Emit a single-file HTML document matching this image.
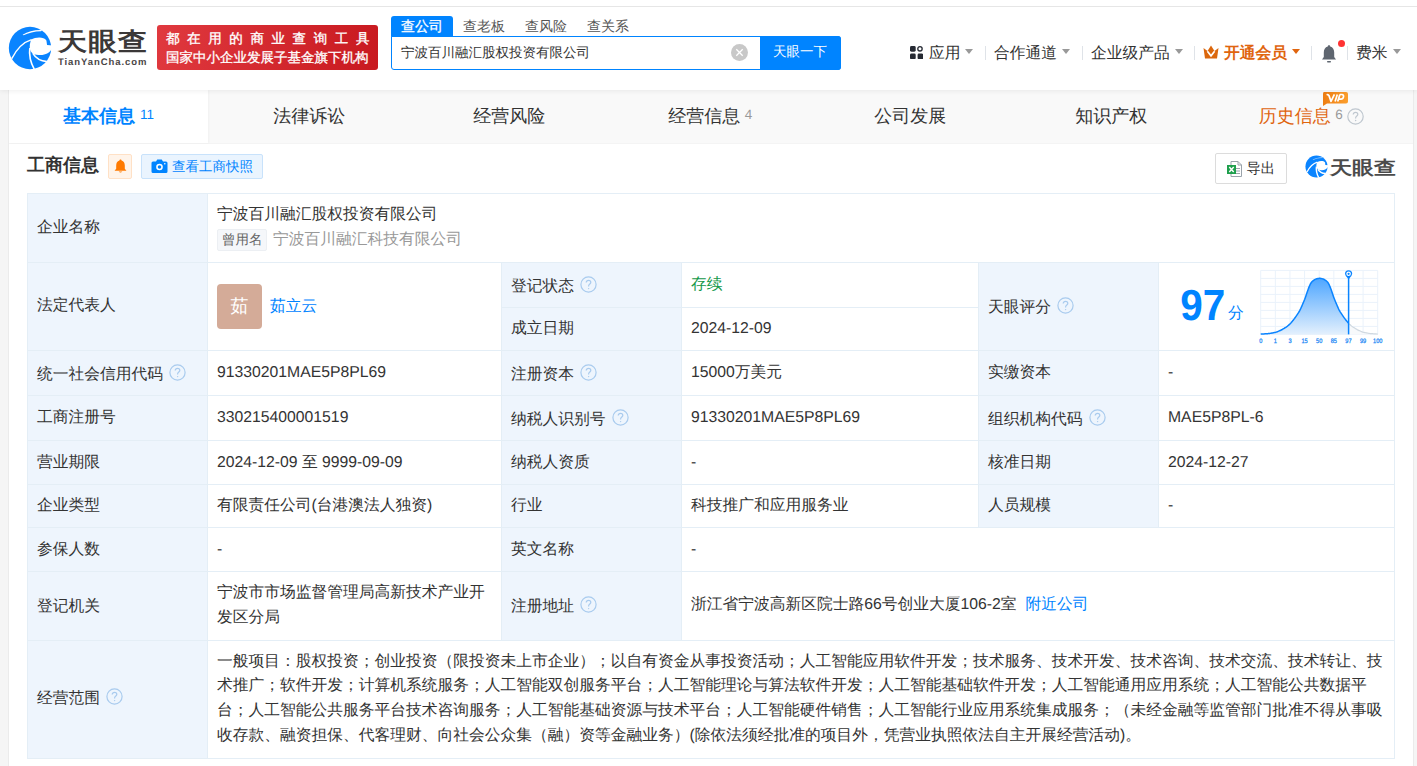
<!DOCTYPE html>
<html><head><meta charset="utf-8">
<style>
*{box-sizing:border-box;margin:0;padding:0}
html,body{width:1417px;height:766px;overflow:hidden}
body{position:relative;background:#f5f5f5;font-family:"Liberation Sans",sans-serif;color:#333;text-rendering:geometricPrecision;font-size:15.75px}
.a{position:absolute;white-space:nowrap}
#hdr{position:absolute;left:0;top:0;width:1417px;height:90px;background:#fff;z-index:2;box-shadow:0 1px 5px rgba(0,0,0,.07)}
#topline{position:absolute;left:0;top:6px;width:1417px;height:1px;background:#e6e6e6}
#card{position:absolute;left:9px;top:90px;width:1404px;height:676px;background:#fff;box-shadow:-1px 0 0 #ebebeb,1px 0 0 #ebebeb}
.tri{position:absolute;width:0;height:0;border-left:4.5px solid transparent;border-right:4.5px solid transparent;border-top:5px solid #999}
.sep{position:absolute;top:46px;width:1px;height:14px;background:#dfe3e8}
.nav{position:absolute;top:43px;font-size:15.75px;line-height:22px;color:#333}
/* tabs */
#tabs{position:absolute;left:0;top:0;width:1404px;height:54px;background:#f9f9f9;border-bottom:1px solid #f4f4f4}
.tab{position:absolute;top:0;height:53px;width:200.57px;text-align:center;font-size:18px;line-height:53px;color:#333}
.tab sup{font-size:13.5px;line-height:0;color:#999;vertical-align:3px;margin-left:4.5px}
/* table */
.ln{position:absolute;background:#e4eef6}
.lb{position:absolute;background:#eef5fd}
.t{position:absolute;white-space:nowrap;font-size:15.75px;line-height:22px;color:#333}
.qi{position:relative;top:2px;margin-left:6px}
.q{display:inline-block;width:16px;height:16px;border:1px solid #aacff2;border-radius:50%;font-size:11px;line-height:14px;text-align:center;color:#aacff2;vertical-align:-2px;margin-left:6px;font-family:"Liberation Sans",sans-serif}
</style></head><body>
<div id="hdr">
  <div id="topline"></div>
  <svg class="a" style="left:6px;top:24px" width="48" height="48" viewBox="0 0 766 766"><circle cx="383" cy="383" r="338" fill="#0a84ff"/><path d="M398 250 C480 205 600 200 645 262 L655 335 L745 345 L745 372 C705 470 610 505 520 495 C470 490 440 480 425 470 C392 440 372 400 380 330 Z" fill="#fff"/><path d="M92 552 C170 400 270 292 408 250" stroke="#fff" stroke-width="22" fill="none"/><path d="M380 385 C365 500 395 620 452 725" stroke="#fff" stroke-width="26" fill="none"/><path d="M428 468 C480 552 560 592 652 600" stroke="#fff" stroke-width="26" fill="none"/><path d="M265 172 C350 125 455 92 575 98 L560 116 C450 118 360 145 280 180 Z" fill="#fff"/></svg>
  <div class="a" style="left:58px;top:22.5px;font-size:29px;line-height:36px;font-weight:bold;color:#3b3838;letter-spacing:1px;transform:scaleY(.86);transform-origin:0 30px">天眼查</div>
  <div class="a" style="left:58px;top:57px;font-size:9.5px;line-height:12px;font-weight:bold;color:#4a4646;letter-spacing:0.92px">TianYanCha.com</div>
  <div class="a" style="left:157px;top:25px;width:221px;height:45px;border-radius:3px;background:linear-gradient(100deg,#e0393f,#c8191f)"></div>
  <div class="a" style="left:166px;top:29px;font-size:13.5px;line-height:20px;color:#fff;letter-spacing:7.6px;-webkit-text-stroke:.35px #fff">都在用的商业查询工具</div>
  <div class="a" style="left:166px;top:47.5px;font-size:13.5px;line-height:20px;color:#fff;-webkit-text-stroke:.3px #fff">国家中小企业发展子基金旗下机构</div>
  <!-- search -->
  <div class="a" style="left:391px;top:16px;width:62px;height:21px;background:#0084ff;border-radius:3px 3px 0 0"></div>
  <div class="a" style="left:401px;top:15px;font-size:14px;line-height:22px;color:#fff;-webkit-text-stroke:.3px #fff">查公司</div>
  <div class="a" style="left:463px;top:15px;font-size:14px;line-height:22px;color:#555">查老板</div>
  <div class="a" style="left:525px;top:15px;font-size:14px;line-height:22px;color:#555">查风险</div>
  <div class="a" style="left:587px;top:15px;font-size:14px;line-height:22px;color:#555">查关系</div>
  <div class="a" style="left:391px;top:36px;width:450px;height:34px;border:1px solid #0084ff;border-radius:0 3px 3px 3px;background:#fff"></div>
  <div class="a" style="left:401px;top:42px;font-size:13.5px;line-height:22px;color:#333">宁波百川融汇股权投资有限公司</div>
  <div class="a" style="left:730.5px;top:43.5px;width:17px;height:17px;border-radius:50%;background:#c8c8c8"></div>
  <svg class="a" style="left:730.5px;top:43.5px" width="17" height="17" viewBox="0 0 17 17"><path d="M5.3 5.3L11.7 11.7M11.7 5.3L5.3 11.7" stroke="#fff" stroke-width="1.3"/></svg>
  <div class="a" style="left:760px;top:36px;width:81px;height:34px;background:#0084ff;border-radius:0 3px 3px 0"></div>
  <div class="a" style="left:773px;top:41px;font-size:13.5px;line-height:22px;color:#fff">天眼一下</div>
  <!-- right nav -->
  <svg class="a" style="left:910px;top:46px" width="13.3" height="13.3" viewBox="0 0 14 14">
    <rect x="0" y="0" width="6" height="6" rx="1.5" fill="#262a33"/>
    <circle cx="10.5" cy="3" r="2.3" stroke="#262a33" stroke-width="1.4" fill="none"/>
    <rect x="0" y="8" width="6" height="6" rx="1.5" fill="#262a33"/>
    <rect x="8" y="8" width="6" height="6" rx="1.5" fill="#262a33"/>
  </svg>
  <div class="nav a" style="left:929px">应用</div>
  <div class="tri" style="left:965px;top:49px"></div>
  <div class="sep" style="left:985px"></div>
  <div class="nav a" style="left:994px">合作通道</div>
  <div class="tri" style="left:1062px;top:49px"></div>
  <div class="sep" style="left:1082px"></div>
  <div class="nav a" style="left:1091px">企业级产品</div>
  <div class="tri" style="left:1175px;top:49px"></div>
  <div class="sep" style="left:1194px"></div>
  <svg class="a" style="left:1203px;top:45px" width="16" height="14" viewBox="0 0 16 14">
    <path d="M0.5 3 L4.5 6 L8 0.5 L11.5 6 L15.5 3 L14 13.5 L2 13.5 Z" fill="#db670d"/>
    <path d="M4.4 6.2 L8 10.8 L11.6 6.2" stroke="#fff" stroke-width="1.7" fill="none"/>
  </svg>
  <div class="nav a" style="left:1224px;color:#e0650f;font-weight:bold">开通会员</div>
  <div class="tri" style="left:1292px;top:49px;border-top-color:#e0650f"></div>
  <div class="sep" style="left:1311px"></div>
  <svg class="a" style="left:1321px;top:44px" width="16" height="19" viewBox="0 0 16 19">
    <path d="M8 1.2 C8.8 1.2 9.2 1.7 9.2 2.4 C12 3 13.2 5.5 13.2 8.5 L13.2 13 L15 15.5 L1 15.5 L2.8 13 L2.8 8.5 C2.8 5.5 4 3 6.8 2.4 C6.8 1.7 7.2 1.2 8 1.2 Z" fill="#5f6670"/>
    <rect x="6" y="17" width="4" height="1.5" rx=".7" fill="#5f6670"/>
  </svg>
  <div class="a" style="left:1338px;top:40px;width:7px;height:7px;border-radius:50%;background:#ff3333"></div>
  <div class="sep" style="left:1347px"></div>
  <div class="nav a" style="left:1356px">费米</div>
  <div class="tri" style="left:1393px;top:49px"></div>
</div>
<div id="card">
  <div id="tabs">
    <div class="a" style="left:0;top:0;width:199px;height:53px;background:#fff;box-shadow:1px 0 2px rgba(0,0,0,.04)"></div>
    <div class="tab a" style="left:0;width:199px;color:#0084ff;font-weight:bold">基本信息<sup style="color:#0084ff;font-weight:normal;margin-left:5px">11</sup></div>
    <div class="tab a" style="left:200px">法律诉讼</div>
    <div class="tab a" style="left:400px">经营风险</div>
    <div class="tab a" style="left:601px">经营信息<sup>4</sup></div>
    <div class="tab a" style="left:801px">公司发展</div>
    <div class="tab a" style="left:1002px">知识产权</div>
    <div class="tab a" style="left:1202px;color:#e0650f">历史信息<sup>6</sup><svg width="17" height="17" viewBox="0 0 17 17" style="vertical-align:-1px;margin-left:4px;position:relative;top:1.5px"><circle cx="8.5" cy="8.5" r="7.7" fill="none" stroke="#bfc7cf" stroke-width="1.2"/><path d="M6.2 6.6 C6.2 5.2 7.2 4.4 8.5 4.4 C9.8 4.4 10.8 5.2 10.8 6.4 C10.8 7.9 8.6 8.2 8.6 10 L8.6 10.6" fill="none" stroke="#bfc7cf" stroke-width="1.2"/><circle cx="8.6" cy="12.6" r=".75" fill="#bfc7cf"/></svg></div>
    <svg class="a" style="left:1313px;top:2px" width="26" height="14" viewBox="0 0 26 14">
      <defs><linearGradient id="vg" x1="0" y1="0" x2="1" y2="0"><stop offset="0" stop-color="#ee7d12"/><stop offset="1" stop-color="#fb9e2c"/></linearGradient></defs>
      <path d="M2 0 H24 Q26 0 26 2 V9.5 Q26 11.5 24 11.5 H5 L1 14 V2 Q1 0 2 0 Z" fill="url(#vg)"/>
      <path d="M4.6 2.8 Q6.4 2.2 7 3.6 L9 9.4 L12.4 2.4 M15.3 2.4 L13.1 9.6 M17.9 2.4 L15.7 9.6 M17.9 2.5 H19.9 Q21.9 2.7 21.5 4.9 Q21.1 7.2 18.9 7.2 H16.9" fill="none" stroke="#fff" stroke-width="1.7" stroke-linejoin="round"/>
    </svg>
  </div>
  <!-- section header -->
  <div class="a" style="left:18px;top:62px;font-size:18px;line-height:26px;font-weight:bold;color:#333">工商信息</div>
  <div class="a" style="left:99px;top:64px;width:24px;height:25px;background:#fff4ea;border:1px solid #ffe1c6;border-radius:2px"></div>
  <svg class="a" style="left:104.5px;top:69px" width="13" height="14" viewBox="0 0 12 13">
    <path d="M6 0.5 C6.6 0.5 7 .9 7 1.5 C9 2 10 3.8 10 6 L10 9 L11.5 10.8 L0.5 10.8 L2 9 L2 6 C2 3.8 3 2 5 1.5 C5 .9 5.4 .5 6 .5Z" fill="#ff7a00"/>
    <path d="M4.3 11.5 Q6 13.5 7.7 11.5 Z" fill="#ff7a00"/>
  </svg>
  <div class="a" style="left:132px;top:64px;width:122px;height:25px;background:#eaf4fe;border:1px solid #c8e2fb;border-radius:2px"></div>
  <svg class="a" style="left:142px;top:68px" width="17" height="16" viewBox="0 0 17 16">
    <path d="M2 3.5 H5 L6.3 1.5 H10.7 L12 3.5 H15 Q16.5 3.5 16.5 5 V13.5 Q16.5 15 15 15 H2 Q.5 15 .5 13.5 V5 Q.5 3.5 2 3.5Z" fill="#0084ff"/>
    <circle cx="8.5" cy="9" r="3.3" fill="#fff"/><circle cx="8.5" cy="9" r="1.8" fill="#0084ff"/>
    <circle cx="13.8" cy="5.8" r=".8" fill="#fff"/>
  </svg>
  <div class="a" style="left:163px;top:65.5px;font-size:13.5px;line-height:22px;color:#0084ff">查看工商快照</div>
  <div class="a" style="left:1206px;top:63px;width:72px;height:31px;border:1px solid #dcdcdc;border-radius:2px;background:#fff"></div>
  <svg class="a" style="left:1218px;top:71px" width="15" height="16" viewBox="0 0 15 16">
    <path d="M4 .5 H11 L14.5 4 V15.5 H4 Z" fill="#fff" stroke="#9aa3ab" stroke-width="1"/>
    <path d="M11 .5 V4 H14.5" fill="none" stroke="#9aa3ab" stroke-width="1"/>
    <rect x="9" y="7" width="4" height="1" fill="#9aa3ab"/><rect x="9" y="9.5" width="4" height="1" fill="#9aa3ab"/><rect x="9" y="12" width="4" height="1" fill="#9aa3ab"/>
    <rect x="0" y="4" width="9" height="9" fill="#1e9f4c"/>
    <path d="M2.3 6 L6.7 11 M6.7 6 L2.3 11" stroke="#fff" stroke-width="1.4"/>
  </svg>
  <div class="a" style="left:1237.5px;top:67.5px;font-size:14.3px;line-height:22px;color:#333">导出</div>
  <svg class="a" style="left:1294.5px;top:63.5px" width="25" height="25" viewBox="0 0 766 766"><circle cx="383" cy="383" r="338" fill="#0a84ff"/><path d="M398 250 C480 205 600 200 645 262 L655 335 L745 345 L745 372 C705 470 610 505 520 495 C470 490 440 480 425 470 C392 440 372 400 380 330 Z" fill="#fff"/><path d="M92 552 C170 400 270 292 408 250" stroke="#fff" stroke-width="40" fill="none"/><path d="M380 385 C365 500 395 620 452 725" stroke="#fff" stroke-width="44" fill="none"/><path d="M428 468 C480 552 560 592 652 600" stroke="#fff" stroke-width="44" fill="none"/><path d="M265 172 C350 125 455 92 575 98 L560 122 C450 124 360 150 280 185 Z" fill="#fff" opacity=".6"/></svg>
  <div class="a" style="left:1321px;top:62px;font-size:22px;line-height:30px;font-weight:bold;color:#4b4b4b;transform:scaleY(.84);transform-origin:0 23px">天眼查</div>
</div>

<div id="tbl">
<div class="lb" style="left:28px;top:194px;width:179px;height:564px"></div>
<div class="lb" style="left:502px;top:263px;width:179px;height:87px"></div>
<div class="lb" style="left:502px;top:351px;width:179px;height:44px"></div>
<div class="lb" style="left:502px;top:396px;width:179px;height:44px"></div>
<div class="lb" style="left:502px;top:441px;width:179px;height:43px"></div>
<div class="lb" style="left:502px;top:485px;width:179px;height:42px"></div>
<div class="lb" style="left:502px;top:528px;width:179px;height:43px"></div>
<div class="lb" style="left:502px;top:572px;width:179px;height:68px"></div>
<div class="lb" style="left:979px;top:351px;width:179px;height:44px"></div>
<div class="lb" style="left:979px;top:396px;width:179px;height:44px"></div>
<div class="lb" style="left:979px;top:441px;width:179px;height:43px"></div>
<div class="lb" style="left:979px;top:485px;width:179px;height:42px"></div>
<div class="lb" style="left:979px;top:263px;width:179px;height:87px"></div>
<div class="ln" style="left:27px;top:193px;width:1368px;height:1px"></div>
<div class="ln" style="left:27px;top:262px;width:1368px;height:1px"></div>
<div class="ln" style="left:27px;top:350px;width:1368px;height:1px"></div>
<div class="ln" style="left:27px;top:395px;width:1368px;height:1px"></div>
<div class="ln" style="left:27px;top:440px;width:1368px;height:1px"></div>
<div class="ln" style="left:27px;top:484px;width:1368px;height:1px"></div>
<div class="ln" style="left:27px;top:527px;width:1368px;height:1px"></div>
<div class="ln" style="left:27px;top:571px;width:1368px;height:1px"></div>
<div class="ln" style="left:27px;top:640px;width:1368px;height:1px"></div>
<div class="ln" style="left:27px;top:758px;width:1368px;height:1px"></div>
<div class="ln" style="left:501px;top:307px;width:180px;height:1px"></div>
<div class="ln" style="left:681px;top:307px;width:297px;height:1px"></div>
<div class="ln" style="left:27px;top:193px;width:1px;height:566px"></div>
<div class="ln" style="left:1394px;top:193px;width:1px;height:566px"></div>
<div class="ln" style="left:207px;top:193px;width:1px;height:565px"></div>
<div class="ln" style="left:501px;top:262px;width:1px;height:378px"></div>
<div class="ln" style="left:681px;top:262px;width:1px;height:378px"></div>
<div class="ln" style="left:978px;top:262px;width:1px;height:265px"></div>
<div class="ln" style="left:1158px;top:262px;width:1px;height:265px"></div>
<div class="t" style="left:37px;top:216.5px;">企业名称</div>
<div class="t" style="left:217px;top:203.5px;">宁波百川融汇股权投资有限公司</div>
<div class="a" style="left:217px;top:229px;width:50px;height:22px;background:#f5f7fa;border:1px solid #eceff3;border-radius:2px"></div>
<div class="t" style="left:222px;top:229px;font-size:13.5px;color:#666">曾用名</div>
<div class="t" style="left:273px;top:229px;color:#999">宁波百川融汇科技有限公司</div>
<div class="t" style="left:37px;top:295.0px;">法定代表人</div>
<div class="a" style="left:217px;top:284px;width:45px;height:45px;background:#d4ab98;border-radius:4px;color:#fff;font-size:18px;line-height:45px;text-align:center">茹</div>
<div class="t" style="left:270px;top:295.5px;color:#0084ff">茹立云</div>
<div class="t" style="left:511px;top:273.5px;">登记状态<svg class="qi" width="17" height="17" viewBox="0 0 17 17"><circle cx="8.5" cy="8.5" r="7.6" fill="none" stroke="#a9cbee" stroke-width="1.2"/><path d="M6.2 6.6 C6.2 5.2 7.2 4.4 8.5 4.4 C9.8 4.4 10.8 5.2 10.8 6.4 C10.8 7.9 8.6 8.2 8.6 10 L8.6 10.6" fill="none" stroke="#a9cbee" stroke-width="1.2"/><circle cx="8.6" cy="12.6" r=".7" fill="#a9cbee"/></svg></div>
<div class="t" style="left:691px;top:273.5px;color:#16994a">存续</div>
<div class="t" style="left:511px;top:317.5px;">成立日期</div>
<div class="t" style="left:691px;top:317.5px;">2024-12-09</div>
<div class="t" style="left:988px;top:295px;">天眼评分<svg class="qi" width="17" height="17" viewBox="0 0 17 17"><circle cx="8.5" cy="8.5" r="7.6" fill="none" stroke="#a9cbee" stroke-width="1.2"/><path d="M6.2 6.6 C6.2 5.2 7.2 4.4 8.5 4.4 C9.8 4.4 10.8 5.2 10.8 6.4 C10.8 7.9 8.6 8.2 8.6 10 L8.6 10.6" fill="none" stroke="#a9cbee" stroke-width="1.2"/><circle cx="8.6" cy="12.6" r=".7" fill="#a9cbee"/></svg></div>
<div class="t" style="left:37px;top:361.5px;">统一社会信用代码<svg class="qi" width="17" height="17" viewBox="0 0 17 17"><circle cx="8.5" cy="8.5" r="7.6" fill="none" stroke="#a9cbee" stroke-width="1.2"/><path d="M6.2 6.6 C6.2 5.2 7.2 4.4 8.5 4.4 C9.8 4.4 10.8 5.2 10.8 6.4 C10.8 7.9 8.6 8.2 8.6 10 L8.6 10.6" fill="none" stroke="#a9cbee" stroke-width="1.2"/><circle cx="8.6" cy="12.6" r=".7" fill="#a9cbee"/></svg></div>
<div class="t" style="left:217px;top:361.5px;">91330201MAE5P8PL69</div>
<div class="t" style="left:511px;top:361.5px;">注册资本<svg class="qi" width="17" height="17" viewBox="0 0 17 17"><circle cx="8.5" cy="8.5" r="7.6" fill="none" stroke="#a9cbee" stroke-width="1.2"/><path d="M6.2 6.6 C6.2 5.2 7.2 4.4 8.5 4.4 C9.8 4.4 10.8 5.2 10.8 6.4 C10.8 7.9 8.6 8.2 8.6 10 L8.6 10.6" fill="none" stroke="#a9cbee" stroke-width="1.2"/><circle cx="8.6" cy="12.6" r=".7" fill="#a9cbee"/></svg></div>
<div class="t" style="left:691px;top:361.5px;">15000万美元</div>
<div class="t" style="left:988px;top:361.5px;">实缴资本</div>
<div class="t" style="left:1168px;top:361.5px;">-</div>
<div class="t" style="left:37px;top:407.0px;">工商注册号</div>
<div class="t" style="left:217px;top:407.0px;">330215400001519</div>
<div class="t" style="left:511px;top:407.0px;">纳税人识别号<svg class="qi" width="17" height="17" viewBox="0 0 17 17"><circle cx="8.5" cy="8.5" r="7.6" fill="none" stroke="#a9cbee" stroke-width="1.2"/><path d="M6.2 6.6 C6.2 5.2 7.2 4.4 8.5 4.4 C9.8 4.4 10.8 5.2 10.8 6.4 C10.8 7.9 8.6 8.2 8.6 10 L8.6 10.6" fill="none" stroke="#a9cbee" stroke-width="1.2"/><circle cx="8.6" cy="12.6" r=".7" fill="#a9cbee"/></svg></div>
<div class="t" style="left:691px;top:407.0px;">91330201MAE5P8PL69</div>
<div class="t" style="left:988px;top:407.0px;">组织机构代码<svg class="qi" width="17" height="17" viewBox="0 0 17 17"><circle cx="8.5" cy="8.5" r="7.6" fill="none" stroke="#a9cbee" stroke-width="1.2"/><path d="M6.2 6.6 C6.2 5.2 7.2 4.4 8.5 4.4 C9.8 4.4 10.8 5.2 10.8 6.4 C10.8 7.9 8.6 8.2 8.6 10 L8.6 10.6" fill="none" stroke="#a9cbee" stroke-width="1.2"/><circle cx="8.6" cy="12.6" r=".7" fill="#a9cbee"/></svg></div>
<div class="t" style="left:1168px;top:407.0px;">MAE5P8PL-6</div>
<div class="t" style="left:37px;top:451.5px;">营业期限</div>
<div class="t" style="left:217px;top:451.5px;">2024-12-09 至 9999-09-09</div>
<div class="t" style="left:511px;top:451.5px;">纳税人资质</div>
<div class="t" style="left:691px;top:451.5px;">-</div>
<div class="t" style="left:988px;top:451.5px;">核准日期</div>
<div class="t" style="left:1168px;top:451.5px;">2024-12-27</div>
<div class="t" style="left:37px;top:495.0px;">企业类型</div>
<div class="t" style="left:217px;top:495.0px;">有限责任公司(台港澳法人独资)</div>
<div class="t" style="left:511px;top:495.0px;">行业</div>
<div class="t" style="left:691px;top:495.0px;">科技推广和应用服务业</div>
<div class="t" style="left:988px;top:495.0px;">人员规模</div>
<div class="t" style="left:1168px;top:495.0px;">-</div>
<div class="t" style="left:37px;top:538.5px;">参保人数</div>
<div class="t" style="left:217px;top:538.5px;">-</div>
<div class="t" style="left:511px;top:538.5px;">英文名称</div>
<div class="t" style="left:691px;top:538.5px;">-</div>
<div class="t" style="left:37px;top:596.0px;">登记机关</div>
<div class="t" style="left:217px;top:580.825px;line-height:24.75px">宁波市市场监督管理局高新技术产业开<br>发区分局</div>
<div class="t" style="left:511px;top:593.5px;">注册地址<svg class="qi" width="17" height="17" viewBox="0 0 17 17"><circle cx="8.5" cy="8.5" r="7.6" fill="none" stroke="#a9cbee" stroke-width="1.2"/><path d="M6.2 6.6 C6.2 5.2 7.2 4.4 8.5 4.4 C9.8 4.4 10.8 5.2 10.8 6.4 C10.8 7.9 8.6 8.2 8.6 10 L8.6 10.6" fill="none" stroke="#a9cbee" stroke-width="1.2"/><circle cx="8.6" cy="12.6" r=".7" fill="#a9cbee"/></svg></div>
<div class="t" style="left:691px;top:594.3px;">浙江省宁波高新区院士路66号创业大厦106-2室<span style="color:#0084ff;margin-left:9px">附近公司</span></div>
<div class="t" style="left:37px;top:686.0px;">经营范围<svg class="qi" width="17" height="17" viewBox="0 0 17 17"><circle cx="8.5" cy="8.5" r="7.6" fill="none" stroke="#a9cbee" stroke-width="1.2"/><path d="M6.2 6.6 C6.2 5.2 7.2 4.4 8.5 4.4 C9.8 4.4 10.8 5.2 10.8 6.4 C10.8 7.9 8.6 8.2 8.6 10 L8.6 10.6" fill="none" stroke="#a9cbee" stroke-width="1.2"/><circle cx="8.6" cy="12.6" r=".7" fill="#a9cbee"/></svg></div>
<div class="t" style="left:217px;top:649.625px;line-height:24.75px">一般项目：股权投资；创业投资（限投资未上市企业）；以自有资金从事投资活动；人工智能应用软件开发；技术服务、技术开发、技术咨询、技术交流、技术转让、技<br>术推广；软件开发；计算机系统服务；人工智能双创服务平台；人工智能理论与算法软件开发；人工智能基础软件开发；人工智能通用应用系统；人工智能公共数据平<br>台；人工智能公共服务平台技术咨询服务；人工智能基础资源与技术平台；人工智能硬件销售；人工智能行业应用系统集成服务；（未经金融等监管部门批准不得从事吸<br>收存款、融资担保、代客理财、向社会公众集（融）资等金融业务）(除依法须经批准的项目外，凭营业执照依法自主开展经营活动)。</div>
</div>
<div id="score">
<div class="a" style="left:1180px;top:281px;font-size:43.5px;line-height:50px;font-weight:bold;color:#0084ff;transform:scaleX(.93);transform-origin:2px 0">97</div>
<div class="a" style="left:1228px;top:303px;font-size:15.75px;line-height:22px;color:#0084ff">分</div>
<svg class="a" style="left:1255px;top:265px" width="130" height="85" viewBox="0 0 130 85"><defs><linearGradient id="cg" x1="0" y1="0" x2="0" y2="1"><stop offset="0" stop-color="#4ea6ff"/><stop offset="1" stop-color="#e3f0fd"/></linearGradient></defs><line x1="5.7" y1="5.4" x2="5.7" y2="69.4" stroke="#eaf2fb" stroke-width="1"/><line x1="20.33" y1="5.4" x2="20.33" y2="69.4" stroke="#eaf2fb" stroke-width="1"/><line x1="34.95" y1="5.4" x2="34.95" y2="69.4" stroke="#eaf2fb" stroke-width="1"/><line x1="49.58" y1="5.4" x2="49.58" y2="69.4" stroke="#eaf2fb" stroke-width="1"/><line x1="64.2" y1="5.4" x2="64.2" y2="69.4" stroke="#eaf2fb" stroke-width="1"/><line x1="78.83" y1="5.4" x2="78.83" y2="69.4" stroke="#eaf2fb" stroke-width="1"/><line x1="93.45" y1="5.4" x2="93.45" y2="69.4" stroke="#eaf2fb" stroke-width="1"/><line x1="108.08" y1="5.4" x2="108.08" y2="69.4" stroke="#eaf2fb" stroke-width="1"/><line x1="122.7" y1="5.4" x2="122.7" y2="69.4" stroke="#eaf2fb" stroke-width="1"/><line x1="5.7" y1="5.4" x2="122.7" y2="5.4" stroke="#eaf2fb" stroke-width="1"/><line x1="5.7" y1="13.4" x2="122.7" y2="13.4" stroke="#eaf2fb" stroke-width="1"/><line x1="5.7" y1="21.4" x2="122.7" y2="21.4" stroke="#eaf2fb" stroke-width="1"/><line x1="5.7" y1="29.4" x2="122.7" y2="29.4" stroke="#eaf2fb" stroke-width="1"/><line x1="5.7" y1="37.4" x2="122.7" y2="37.4" stroke="#eaf2fb" stroke-width="1"/><line x1="5.7" y1="45.4" x2="122.7" y2="45.4" stroke="#eaf2fb" stroke-width="1"/><line x1="5.7" y1="53.4" x2="122.7" y2="53.4" stroke="#eaf2fb" stroke-width="1"/><line x1="5.7" y1="61.4" x2="122.7" y2="61.4" stroke="#eaf2fb" stroke-width="1"/><line x1="5.7" y1="69.4" x2="122.7" y2="69.4" stroke="#eaf2fb" stroke-width="1"/><polygon points="5.7,69.4 5.7,69.12 6.2,69.09 6.7,69.05 7.2,69.02 7.7,68.98 8.2,68.95 8.7,68.91 9.2,68.88 9.7,68.84 10.2,68.81 10.7,68.77 11.2,68.74 11.7,68.7 12.2,68.67 12.7,68.63 13.2,68.6 13.7,68.56 14.2,68.51 14.7,68.45 15.2,68.37 15.7,68.28 16.2,68.19 16.7,68.09 17.2,67.99 17.7,67.89 18.2,67.8 18.7,67.7 19.2,67.6 19.7,67.51 20.2,67.4 20.7,67.29 21.2,67.15 21.7,66.99 22.2,66.79 22.7,66.58 23.2,66.37 23.7,66.15 24.2,65.93 24.7,65.72 25.2,65.5 25.7,65.27 26.2,65.04 26.7,64.78 27.2,64.51 27.7,64.21 28.2,63.91 28.7,63.6 29.2,63.3 29.7,62.99 30.2,62.68 30.7,62.37 31.2,62.06 31.7,61.72 32.2,61.34 32.7,60.94 33.2,60.51 33.7,60.07 34.2,59.62 34.7,59.16 35.2,58.68 35.7,58.16 36.2,57.6 36.7,57.01 37.2,56.4 37.7,55.78 38.2,55.16 38.7,54.54 39.2,53.91 39.7,53.25 40.2,52.56 40.7,51.84 41.2,51.09 41.7,50.34 42.2,49.58 42.7,48.82 43.2,48.07 43.7,47.3 44.2,46.51 44.7,45.66 45.2,44.71 45.7,43.66 46.2,42.54 46.7,41.39 47.2,40.23 47.7,39.06 48.2,37.9 48.7,36.73 49.2,35.54 49.7,34.3 50.2,32.97 50.7,31.56 51.2,30.1 51.7,28.6 52.2,27.11 52.7,25.64 53.2,24.23 53.7,22.89 54.2,21.64 54.7,20.47 55.2,19.4 55.7,18.47 56.2,17.7 56.7,17.06 57.2,16.51 57.7,16.04 58.2,15.64 58.7,15.29 59.2,14.96 59.7,14.66 60.2,14.38 60.7,14.15 61.2,13.97 61.7,13.83 62.2,13.71 62.7,13.6 63.2,13.49 63.7,13.39 64.2,13.32 64.7,13.3 65.2,13.34 65.7,13.43 66.2,13.53 66.7,13.64 67.2,13.76 67.7,13.88 68.2,14.04 68.7,14.24 69.2,14.49 69.7,14.78 70.2,15.09 70.7,15.42 71.2,15.79 71.7,16.22 72.2,16.72 72.7,17.3 73.2,17.99 73.7,18.82 74.2,19.81 74.7,20.93 75.2,22.13 75.7,23.42 76.2,24.78 76.7,26.22 77.2,27.71 77.7,29.2 78.2,30.69 78.7,32.14 79.2,33.51 79.7,34.8 80.2,36.02 80.7,37.2 81.2,38.37 81.7,39.53 82.2,40.69 82.7,41.85 83.2,42.99 83.7,44.09 84.2,45.1 84.7,46.01 85.2,46.83 85.7,47.61 86.2,48.37 86.7,49.13 87.2,49.88 87.7,50.64 88.2,51.39 88.7,52.13 89.2,52.84 89.7,53.52 90.2,54.16 90.7,54.79 91.2,55.41 91.7,56.03 92.2,56.64 92.7,57.25 93.2,57.83 93.6,58.27 93.6,69.4" fill="url(#cg)"/><polygon points="93.6,69.4 93.6,58.27 93.7,58.38 94.2,58.88 94.7,59.35 95.2,59.8 95.7,60.24 96.2,60.68 96.7,61.1 97.2,61.5 97.7,61.86 98.2,62.19 98.7,62.5 99.2,62.81 99.7,63.11 100.2,63.42 100.7,63.73 101.2,64.03 101.7,64.33 102.2,64.62 102.7,64.89 103.2,65.13 103.7,65.36 104.2,65.58 104.7,65.8 105.2,66.02 105.7,66.24 106.2,66.45 106.7,66.67 107.2,66.87 107.7,67.06 108.2,67.21 108.7,67.34 109.2,67.44 109.7,67.54 110.2,67.64 110.7,67.74 111.2,67.84 111.7,67.93 112.2,68.03 112.7,68.13 113.2,68.22 113.7,68.32 114.2,68.4 114.7,68.47 115.2,68.53 115.7,68.57 116.2,68.61 116.7,68.65 117.2,68.68 117.7,68.72 118.2,68.75 118.7,68.79 119.2,68.82 119.7,68.86 120.2,68.89 120.7,68.93 121.2,68.96 121.7,69.0 122.2,69.03 122.7,69.07 122.7,69.4" fill="#f7f9fb"/><polyline points="93.6,58.27 93.7,58.38 94.2,58.88 94.7,59.35 95.2,59.8 95.7,60.24 96.2,60.68 96.7,61.1 97.2,61.5 97.7,61.86 98.2,62.19 98.7,62.5 99.2,62.81 99.7,63.11 100.2,63.42 100.7,63.73 101.2,64.03 101.7,64.33 102.2,64.62 102.7,64.89 103.2,65.13 103.7,65.36 104.2,65.58 104.7,65.8 105.2,66.02 105.7,66.24 106.2,66.45 106.7,66.67 107.2,66.87 107.7,67.06 108.2,67.21 108.7,67.34 109.2,67.44 109.7,67.54 110.2,67.64 110.7,67.74 111.2,67.84 111.7,67.93 112.2,68.03 112.7,68.13 113.2,68.22 113.7,68.32 114.2,68.4 114.7,68.47 115.2,68.53 115.7,68.57 116.2,68.61 116.7,68.65 117.2,68.68 117.7,68.72 118.2,68.75 118.7,68.79 119.2,68.82 119.7,68.86 120.2,68.89 120.7,68.93 121.2,68.96 121.7,69.0 122.2,69.03 122.7,69.07" fill="none" stroke="#cfd8e0" stroke-width="1.2"/><polyline points="5.7,69.12 6.2,69.09 6.7,69.05 7.2,69.02 7.7,68.98 8.2,68.95 8.7,68.91 9.2,68.88 9.7,68.84 10.2,68.81 10.7,68.77 11.2,68.74 11.7,68.7 12.2,68.67 12.7,68.63 13.2,68.6 13.7,68.56 14.2,68.51 14.7,68.45 15.2,68.37 15.7,68.28 16.2,68.19 16.7,68.09 17.2,67.99 17.7,67.89 18.2,67.8 18.7,67.7 19.2,67.6 19.7,67.51 20.2,67.4 20.7,67.29 21.2,67.15 21.7,66.99 22.2,66.79 22.7,66.58 23.2,66.37 23.7,66.15 24.2,65.93 24.7,65.72 25.2,65.5 25.7,65.27 26.2,65.04 26.7,64.78 27.2,64.51 27.7,64.21 28.2,63.91 28.7,63.6 29.2,63.3 29.7,62.99 30.2,62.68 30.7,62.37 31.2,62.06 31.7,61.72 32.2,61.34 32.7,60.94 33.2,60.51 33.7,60.07 34.2,59.62 34.7,59.16 35.2,58.68 35.7,58.16 36.2,57.6 36.7,57.01 37.2,56.4 37.7,55.78 38.2,55.16 38.7,54.54 39.2,53.91 39.7,53.25 40.2,52.56 40.7,51.84 41.2,51.09 41.7,50.34 42.2,49.58 42.7,48.82 43.2,48.07 43.7,47.3 44.2,46.51 44.7,45.66 45.2,44.71 45.7,43.66 46.2,42.54 46.7,41.39 47.2,40.23 47.7,39.06 48.2,37.9 48.7,36.73 49.2,35.54 49.7,34.3 50.2,32.97 50.7,31.56 51.2,30.1 51.7,28.6 52.2,27.11 52.7,25.64 53.2,24.23 53.7,22.89 54.2,21.64 54.7,20.47 55.2,19.4 55.7,18.47 56.2,17.7 56.7,17.06 57.2,16.51 57.7,16.04 58.2,15.64 58.7,15.29 59.2,14.96 59.7,14.66 60.2,14.38 60.7,14.15 61.2,13.97 61.7,13.83 62.2,13.71 62.7,13.6 63.2,13.49 63.7,13.39 64.2,13.32 64.7,13.3 65.2,13.34 65.7,13.43 66.2,13.53 66.7,13.64 67.2,13.76 67.7,13.88 68.2,14.04 68.7,14.24 69.2,14.49 69.7,14.78 70.2,15.09 70.7,15.42 71.2,15.79 71.7,16.22 72.2,16.72 72.7,17.3 73.2,17.99 73.7,18.82 74.2,19.81 74.7,20.93 75.2,22.13 75.7,23.42 76.2,24.78 76.7,26.22 77.2,27.71 77.7,29.2 78.2,30.69 78.7,32.14 79.2,33.51 79.7,34.8 80.2,36.02 80.7,37.2 81.2,38.37 81.7,39.53 82.2,40.69 82.7,41.85 83.2,42.99 83.7,44.09 84.2,45.1 84.7,46.01 85.2,46.83 85.7,47.61 86.2,48.37 86.7,49.13 87.2,49.88 87.7,50.64 88.2,51.39 88.7,52.13 89.2,52.84 89.7,53.52 90.2,54.16 90.7,54.79 91.2,55.41 91.7,56.03 92.2,56.64 92.7,57.25 93.2,57.83 93.6,58.27" fill="none" stroke="#0a84ff" stroke-width="1.5"/><line x1="93.6" y1="11" x2="93.6" y2="69.4" stroke="#0a84ff" stroke-width="1.5"/><path d="M90.0,8.8 A3.6,3.6 0 1 1 97.2,8.8 Q97.0,11.4 93.6,14.3 Q90.2,11.4 90.0,8.8 Z" fill="#0a84ff"/><circle cx="93.6" cy="8.8" r="2.3" fill="#fff"/><circle cx="93.6" cy="8.8" r="1.1" fill="#0a84ff"/><text transform="translate(5.7,77.5) scale(.88,1)" text-anchor="middle" font-family="Liberation Sans" font-size="6.4" fill="#2188f5" stroke="#2188f5" stroke-width=".25">0</text><text transform="translate(20.33,77.5) scale(.88,1)" text-anchor="middle" font-family="Liberation Sans" font-size="6.4" fill="#2188f5" stroke="#2188f5" stroke-width=".25">1</text><text transform="translate(34.95,77.5) scale(.88,1)" text-anchor="middle" font-family="Liberation Sans" font-size="6.4" fill="#2188f5" stroke="#2188f5" stroke-width=".25">3</text><text transform="translate(49.58,77.5) scale(.88,1)" text-anchor="middle" font-family="Liberation Sans" font-size="6.4" fill="#2188f5" stroke="#2188f5" stroke-width=".25">15</text><text transform="translate(64.2,77.5) scale(.88,1)" text-anchor="middle" font-family="Liberation Sans" font-size="6.4" fill="#2188f5" stroke="#2188f5" stroke-width=".25">50</text><text transform="translate(78.83,77.5) scale(.88,1)" text-anchor="middle" font-family="Liberation Sans" font-size="6.4" fill="#2188f5" stroke="#2188f5" stroke-width=".25">85</text><text transform="translate(93.45,77.5) scale(.88,1)" text-anchor="middle" font-family="Liberation Sans" font-size="6.4" fill="#2188f5" stroke="#2188f5" stroke-width=".25">97</text><text transform="translate(108.08,77.5) scale(.88,1)" text-anchor="middle" font-family="Liberation Sans" font-size="6.4" fill="#2188f5" stroke="#2188f5" stroke-width=".25">99</text><text transform="translate(122.7,77.5) scale(.88,1)" text-anchor="middle" font-family="Liberation Sans" font-size="6.4" fill="#2188f5" stroke="#2188f5" stroke-width=".25">100</text></svg>
</div>
</body></html>
